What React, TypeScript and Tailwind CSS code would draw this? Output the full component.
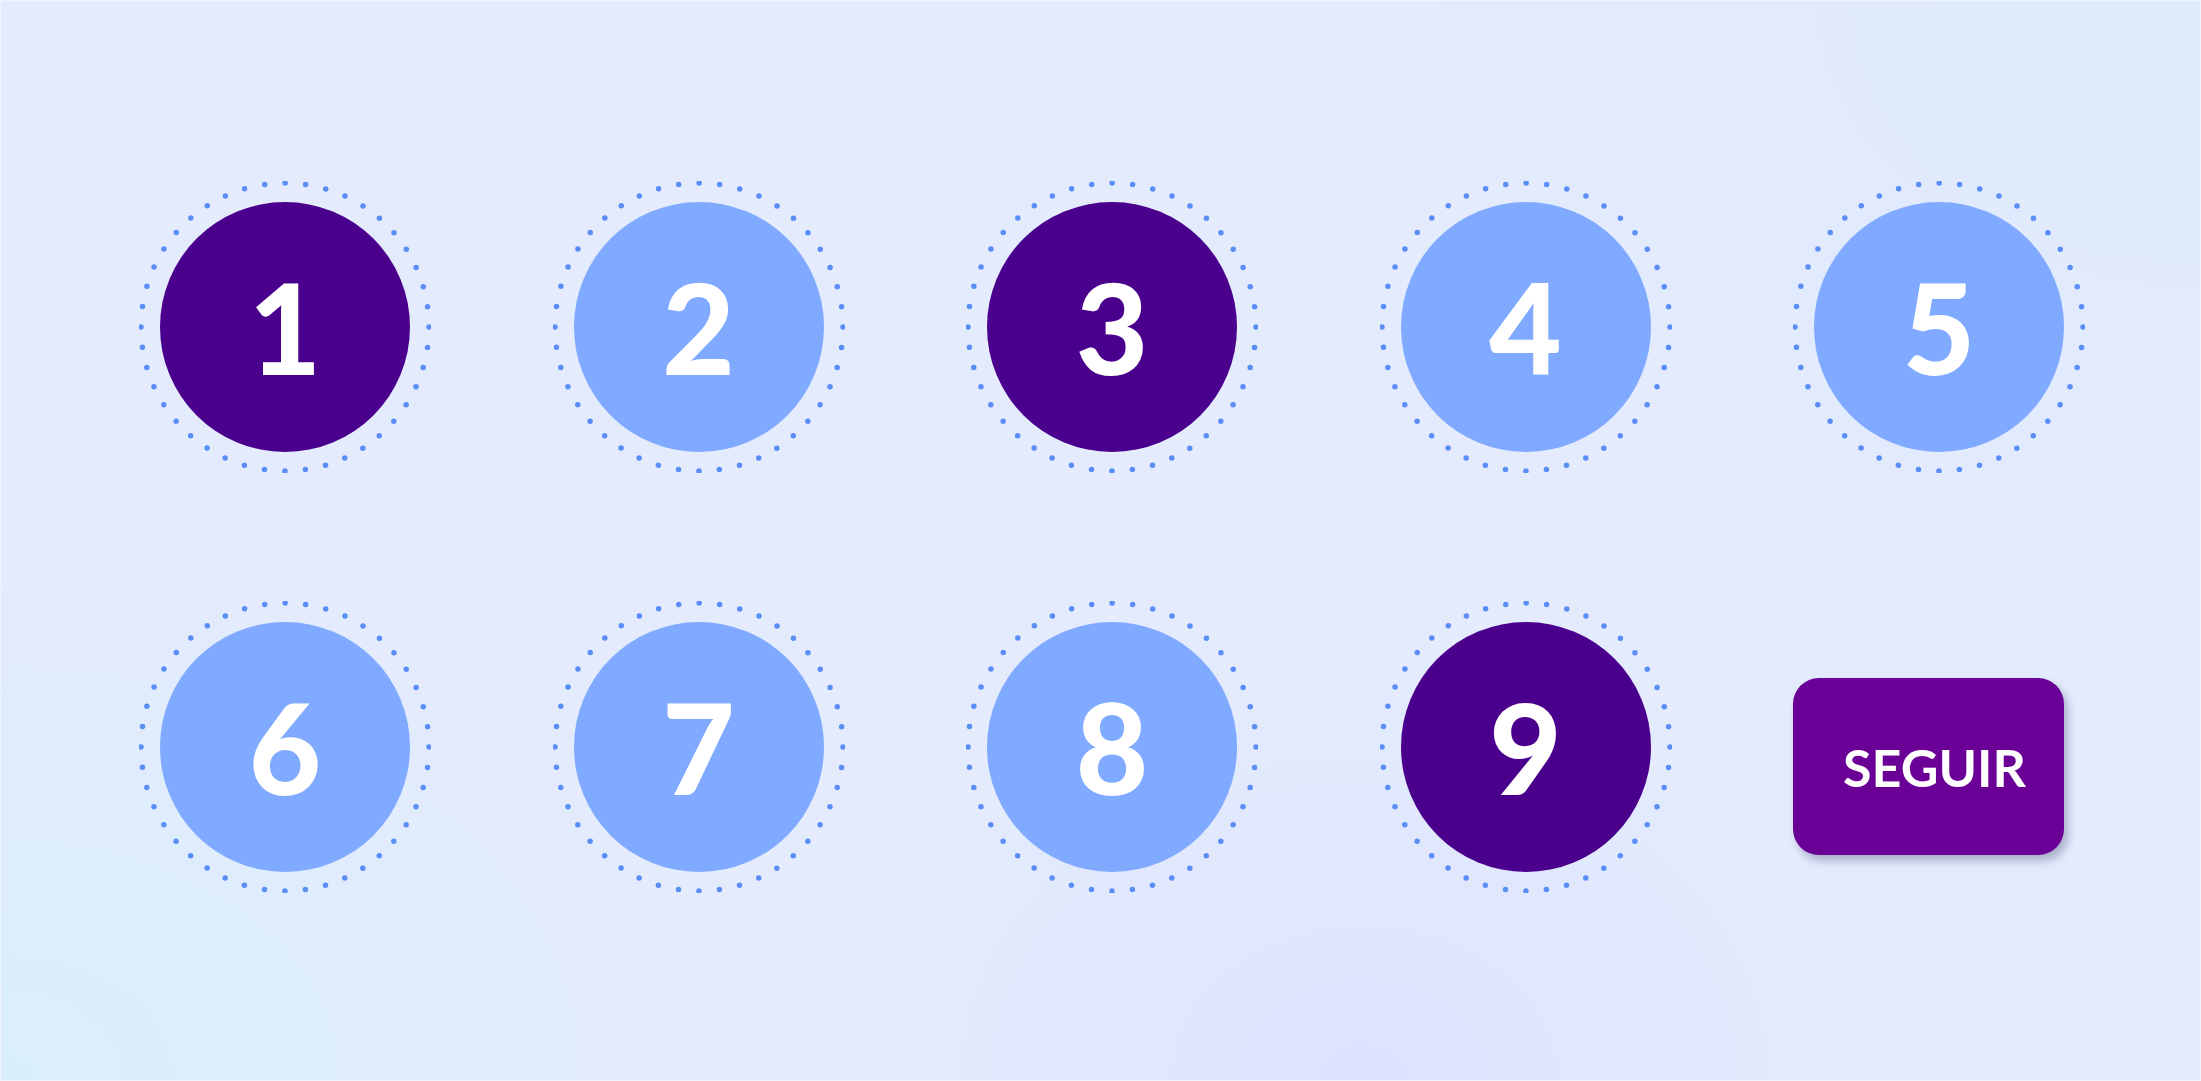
import React from 'react';

type Step = { n: number; active: boolean };

const steps: Step[] = [
    { n: 1, active: true },
    { n: 2, active: false },
    { n: 3, active: true },
    { n: 4, active: false },
    { n: 5, active: false },
    { n: 6, active: false },
    { n: 7, active: false },
    { n: 8, active: false },
    { n: 9, active: true },
];

const DottedRing = () => (
    <svg className="absolute inset-0" width="292" height="292" viewBox="0 0 292 292">
        <circle
            cx="146"
            cy="146"
            r="144"
            fill="none"
            stroke="#5a8ef6"
            strokeWidth="5.5"
            strokeLinecap="round"
            strokeDasharray="0 20.56"
        />
    </svg>
);

const StepCircle = ({ step }: { step: Step }) => (
    <div className="relative w-[292px] h-[292px] flex items-center justify-center">
        <DottedRing />
        <div
            className={
                step.active
                    ? 'w-[250px] h-[250px] rounded-full bg-[#4a008c] flex items-center justify-center'
                    : 'w-[250px] h-[250px] rounded-full bg-[#80aaff] flex items-center justify-center'
            }
        >
            <span className="text-white text-[125px] leading-none font-black font-['Lato',sans-serif]">{step.n}</span>
        </div>
    </div>
);

export default function App() {
    return (
        <div className="w-full h-screen overflow-hidden border border-[#eef3fe] bg-[#e3ebfd] bg-[radial-gradient(ellipse_700px_500px_at_0%_100%,#d9eefd_0%,rgba(217,238,253,0)_100%),radial-gradient(ellipse_500px_400px_at_62%_100%,#dde3fe_0%,rgba(221,227,254,0)_100%),radial-gradient(ellipse_800px_600px_at_100%_0%,#dfeafd_0%,rgba(223,234,253,0)_100%)]">
            <div className="pt-[180px] pl-[138px] grid grid-cols-[repeat(5,292px)] gap-x-[121.5px] gap-y-[128px]">
                {steps.map((s) => (
                    <StepCircle key={s.n} step={s} />
                ))}
                <div className="w-[292px] h-[292px] flex items-center justify-center">
                    <button className="ml-[-21px] mt-[39px] w-[271px] h-[177px] rounded-[26px] bg-[#6a0096] shadow-[4px_6px_8px_rgba(40,40,80,0.3)] flex items-center justify-center pl-3 text-white text-[52px] leading-none font-bold font-['Lato',sans-serif]">
                        SEGUIR
                    </button>
                </div>
            </div>
        </div>
    );
}
